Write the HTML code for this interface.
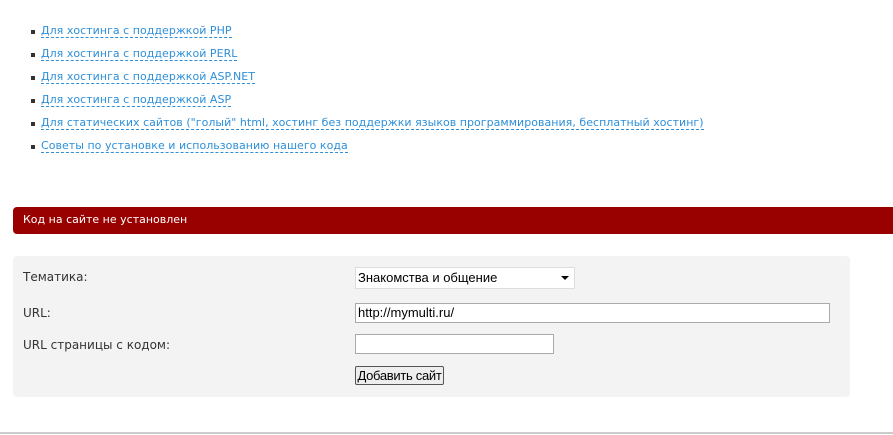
<!DOCTYPE html>
<html><head><meta charset="utf-8"><style>
body{margin:0;width:893px;height:435px;background:#fff;position:relative;overflow:hidden;font-family:"DejaVu Sans","Liberation Sans",sans-serif;font-size:11px;}
.l{position:absolute;left:41px;color:#2e8fd8;border-bottom:1px dashed #2e8fd8;line-height:13px;white-space:nowrap;letter-spacing:0.03px}
.b{position:absolute;left:31px;width:4px;height:4px;background:#333}
.red{position:absolute;left:13px;top:207px;width:900px;height:27px;background:#990000;border-radius:4px;color:#fff;line-height:26px;padding-left:10px;box-sizing:border-box}
.gray{position:absolute;left:13px;top:256px;width:837px;height:141px;background:#f3f3f3;border-radius:4px}
.lab{position:absolute;left:23px;color:#333;font-size:12px;white-space:nowrap}
.in{position:absolute;left:355px;background:#fff;border:1px solid #aaa;box-sizing:border-box;font-family:"Liberation Sans",sans-serif;font-size:13px;line-height:17px;padding-left:2px;white-space:nowrap;overflow:hidden}
</style></head><body>
<div class="b" style="top:30px"></div><div class="l" style="top:24px">Для хостинга с поддержкой PHP</div>
<div class="b" style="top:53px"></div><div class="l" style="top:47px">Для хостинга с поддержкой PERL</div>
<div class="b" style="top:76px"></div><div class="l" style="top:70px">Для хостинга с поддержкой ASP.NET</div>
<div class="b" style="top:99px"></div><div class="l" style="top:93px">Для хостинга с поддержкой ASP</div>
<div class="b" style="top:122px"></div><div class="l" style="top:116px">Для статических сайтов ("голый" html, хостинг без поддержки языков программирования, бесплатный хостинг)</div>
<div class="b" style="top:145px"></div><div class="l" style="top:139px">Советы по установке и использованию нашего кода</div>
<div class="red">Код на сайте не установлен</div>
<div class="gray"></div>
<div class="lab" style="top:270px">Тематика:</div>
<div class="lab" style="top:306px">URL:</div>
<div class="lab" style="top:338px">URL страницы с кодом:</div>
<div class="in" style="top:267px;width:220px;height:22px;border-color:#ddd;line-height:20px">Знакомства и общение<span style="position:absolute;right:5px;top:8px;border:4px solid transparent;border-top:4px solid #000;border-bottom:0"></span></div>
<div class="in" style="top:303px;width:475px;height:20px">http://mymulti.ru/</div>
<div class="in" style="top:334px;width:199px;height:20px"></div>
<div class="in" style="top:366px;width:89px;height:19px;border:1px solid #555;border-radius:2px;background:#eee;padding:0;text-align:center;letter-spacing:-0.3px;line-height:17px">Добавить сайт</div>
<div style="position:absolute;left:0;top:432px;width:893px;height:2px;background:#ccc"></div>
</body></html>
